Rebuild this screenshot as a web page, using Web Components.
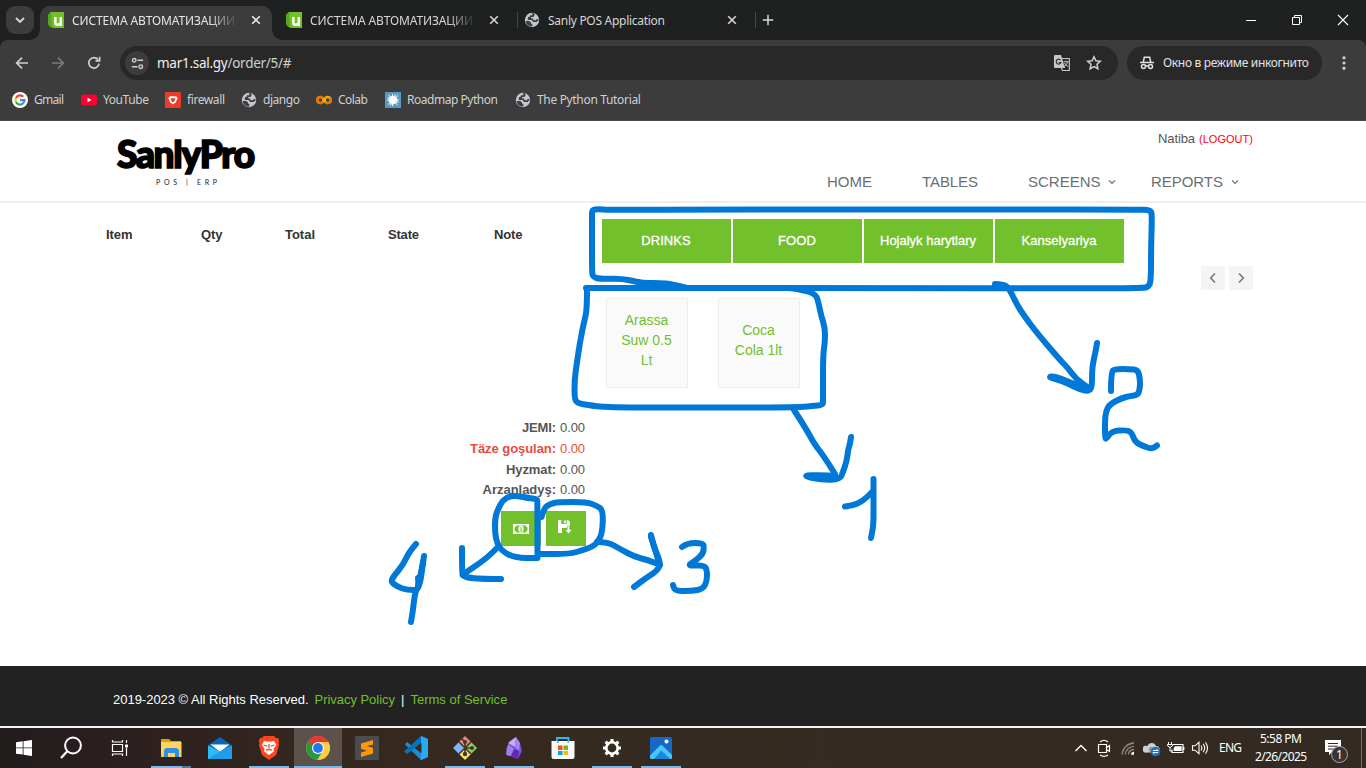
<!DOCTYPE html>
<html lang="ru"><head><meta charset="utf-8"><title>СИСТЕМА АВТОМАТИЗАЦИИ</title>
<style>
html,body{margin:0;height:100%;overflow:hidden;background:#fff}
body{font-family:"Liberation Sans",Arial,sans-serif}
</style></head><body>
<desktop-screen></desktop-screen>
<script>
const define=(name,css,html,setup)=>customElements.define(name,class extends HTMLElement{
  connectedCallback(){
    if(this.shadowRoot)return;
    const root=this.attachShadow({mode:'open'});
    root.innerHTML=`<style>*{box-sizing:border-box}${css}</style>${typeof html==='function'?html(this):html}`;
    if(setup)setup(this,root);
  }
});

/* One line of text whose tracking is adjusted so that it takes exactly w pixels. */
define('fit-text',`:host{display:block;flex:none;white-space:pre}span{display:inline-block;white-space:pre}`,'<span><slot></slot></span>',(el,root)=>{
  const s=root.querySelector('span'),w=+el.getAttribute('w'),n=el.textContent.length;
  if(!w)return;
  const ls=(w-s.getBoundingClientRect().width)/Math.max(1,n-1);
  s.style.letterSpacing=ls+'px';s.style.marginRight=-ls+'px';
});

const globe='<circle cx="8" cy="8" r="7.2" fill="#c4c7cc"/><path d="M1.700 9h3.600l1.700 1.500v1.300H8.300v2.700C4.500 14.600 2 12.300 1.700 9z" fill="#3c3e42"/><path d="M8.200 1.600l1.600.9-.8 1.700H6.600L6 5.800H4.800L4.600 7.200H8l1.600 2h2.800L13 8l1.500-.2" fill="none" stroke="#3c3e42" stroke-width="1.700"/>';
const P=(d,w=1.7,x='')=>`<path d="${d}" fill="none" stroke="currentColor" stroke-width="${w}" ${x}/>`;
const icons={
 unify:['0 0 16 16','<path d="M3 0h13v16H6a6 6 0 0 1-6-6V3z" fill="#72c02c"/><path d="M3 0L0 3v7a6 6 0 0 0 4 5.600z" fill="#5aa51b"/><path d="M7.400 5v5.800q0 2 2.200 2t3.200-2V5M12.800 10v4" fill="none" stroke="#fff" stroke-width="2.400"/>'],
 globe:['0 0 16 16',globe],
 down:['0 0 16 16',P('M4 6l4 4 4-4',1.9)],
 caret:['0 0 10 10',P('M2 3.500l3 3 3-3',1.1)],
 x:['0 0 16 16',P('M4.200 4.200l7.600 7.600M11.800 4.200l-7.600 7.600',1.6)],
 plus:['0 0 16 16',P('M8 2.700v10.600M2.700 8h10.600',1.5)],
 back:['0 0 16 16',P('M14 8H3M8 2.700L2.700 8 8 13.300')],
 fwd:['0 0 16 16',P('M2 8h11M8 2.700L13.300 8 8 13.300')],
 reload:['0 0 16 16',P('M13.100 8.700A5.200 5.200 0 1 1 12 4.500M13.600 1.800v4.100H9.500')],
 tune:['0 0 16 16',P('M8 4.600h6M2 11.400h6',1.6)+'<g fill="none" stroke="currentColor" stroke-width="1.500"><circle cx="4.500" cy="4.600" r="1.900"/><circle cx="11.500" cy="11.400" r="1.900"/></g>'],
 translate:['0 0 18 18','<path d="M2 1h6l4 13H2a1 1 0 0 1-1-1V2a1 1 0 0 1 1-1z" fill="#c7c7c7"/><path d="M9 4.500h7.300v12H9.500L8.300 14" fill="none" stroke="#c7c7c7" stroke-width="1.200"/><path d="M7.600 6.200a2.400 2.400 0 1 0 .300 2.300H5.700" fill="none" stroke="#333" stroke-width="1.200"/><path d="M10.500 7.800h5M13 6.500v1.300M14.500 8c-.500 2-2 3.500-3.500 4.500M11.500 9c.700 1.600 2 2.800 3.300 3.500" fill="none" stroke="#c7c7c7"/>'],
 star:['0 0 16 16',P('M8 1.800l1.900 4 4.400.500-3.300 3 .9 4.400L8 11.500l-3.900 2.200.9-4.400-3.300-3 4.400-.500z',1.5)],
 incog:['0 0 16 16',P('M1 7.400h14M4.300 7l1-4.700h5.400l1 4.700M6.400 11.200q1.600-.900 3.200 0',1.5)+'<g fill="none" stroke="currentColor" stroke-width="1.500"><circle cx="4.500" cy="11.600" r="2"/><circle cx="11.500" cy="11.600" r="2"/></g>'],
 kebab:['0 0 16 16','<g fill="currentColor"><circle cx="8" cy="2.800" r="1.600"/><circle cx="8" cy="8" r="1.600"/><circle cx="8" cy="13.200" r="1.600"/></g>'],
 min:['0 0 12 12','<path d="M1 6h10v1H1z" fill="#fff"/>'],
 restore:['0 0 12 12','<path d="M1.500 3.500h7v7h-7zM3.500 3V1.500h7v7H9" fill="none" stroke="#fff"/>'],
 close:['0 0 12 12','<path d="M1 1l10 10M11 1L1 11" stroke="#fff" stroke-width="1.100"/>'],
 google:['0 0 16 16','<circle cx="8" cy="8" r="8" fill="#fff"/><g fill="none" stroke-width="2.200"><path d="M11.300 4.800A4.500 4.500 0 0 0 4 5.900" stroke="#ea4335"/><path d="M4 5.900a4.500 4.500 0 0 0 0 4.200" stroke="#fbbc05"/><path d="M4 10.100a4.500 4.500 0 0 0 7 1.300" stroke="#34a853"/><path d="M11 11.400A4.500 4.500 0 0 0 12.500 8.200H8" stroke="#4285f4"/></g>'],
 yt:['0 0 16 16','<rect y="2.500" width="16" height="11" rx="3" fill="#ff0033"/><path d="M6.500 5.700v4.600l4-2.300z" fill="#fff"/>'],
 fire:['0 0 16 16','<rect width="16" height="16" rx="1" fill="#ea3c27"/><path d="M5 4.300h6l1.700 1.900-1.900 4L8 12.500l-2.800-2.300-1.900-4z" fill="#fff"/><path d="M5.500 6.200h5L9.300 9.300 8 10.300 6.700 9.300z" fill="#ea3c27"/>'],
 colab:['0 0 16 16','<g fill="none" stroke-width="2.500"><circle cx="4.300" cy="8" r="3.100" stroke="#f9ab00"/><circle cx="11.700" cy="8" r="3.100" stroke="#f9ab00"/><path d="M7 6.500a3.100 3.100 0 1 0 0 3M13.900 5.800A3.100 3.100 0 0 1 9.500 10.200" stroke="#e8710a"/></g>'],
 road:['0 0 16 16','<path d="M0 0h16v16H0z" fill="#5a9cc0"/><circle cx="8" cy="8" r="4.300" fill="#fff"/><path d="M3.500 3l9 10M13 3.500L3 12.500M7.500 2v12M2 8h12M10.500 2.500l-5 11M2.500 5.500l11 5" stroke="#fff" stroke-width="1"/>'],
 win:['0 0 16 16','<path d="M0 2.300l6.700-1v6.200H0zM7.500 1.200L16 0v7.500H7.500zM0 8.300h6.700v6.300L0 13.700zM7.500 8.300H16V16l-8.500-1.200z" fill="#fff"/>'],
 search:['0 0 24 24','<circle cx="14" cy="9.500" r="7.900" fill="none" stroke="#fff" stroke-width="2"/><path d="M8.500 15L2 22" stroke="#fff" stroke-width="2.200"/>'],
 task:['0 0 18 18','<path d="M1.500 5.500h10v7h-10zM1.500 1v2h10V1M1.500 17v-2h10v2M15.500 1v3M15.500 9v8" fill="none" stroke="#fff" stroke-width="1.200"/><path d="M14 5.500h3v3h-3z" fill="#fff"/>'],
 explorer:['0 0 24 24','<path d="M2 3h8l2 2h10v5H2z" fill="#e1a000"/><path d="M2 6h20.500v15H2z" fill="#ffd45e"/><path d="M5 21v-7l2-2h11l2 2v7h-4v-4H9v4z" fill="#318fdf"/><path d="M2 18h3v3H2z" fill="#ffc83d"/>'],
 mail:['0 0 24 24','<path d="M0 9.500L12 1l12 8.500v3H0z" fill="#0868bb"/><path d="M2.500 8.500h19L12 16z" fill="#fff"/><path d="M0 9.500L12 15.500l12-6V23H0z" fill="#2bbcf6"/><path d="M0 23L12 15.500l12-6V23z" fill="#1c9fe8"/>'],
 brave:['0 0 24 24','<path d="M7 0h10l2 2h2l1.300 3-.7 2 .5 2-3 10L12 24l-7-5L2 9l.5-2-.8-2L3 2h2z" fill="#ff4520"/><path d="M7 5l5 .7 5-.7 2.200 4-2.700 4 .3 2.500L12 19l-4.800-3.500.3-2.500-2.700-4z" fill="#fff"/><path d="M6.500 9l3.700 1.200M17.500 9l-3.700 1.200M12 8v4M9 14.200l3-.9 3 .9" stroke="#ff4520" stroke-width="1.300" fill="none"/>'],
 chrome:['0 0 24 24','<circle cx="12" cy="12" r="11.800" fill="#ffce44"/><path d="M1.800 6A11.800 11.800 0 0 0 11.500 23.800L17 15z" fill="#279847"/><path d="M12 6h10.300A11.800 11.800 0 0 1 11.500 23.800L17.100 15z" fill="#ffce44"/><path d="M1.800 6L7 15l5-9h10.300A11.800 11.800 0 0 0 1.800 6z" fill="#e53935"/><path d="M1.800 6l5 9 3 2.500L8 9z" fill="#279847"/><circle cx="12" cy="12" r="6" fill="#fff"/><circle cx="12" cy="12" r="4.900" fill="#2775ed"/>'],
 sublime:['0 0 24 24','<rect width="24" height="24" rx="1.500" fill="#4b4c4e"/><path d="M6 7.500L18 4v4.500L12 10l6 2v5.500L6 21v-4.500l6-1.700-6-2z" fill="#ff9800"/>'],
 code:['0 0 24 24','<path d="M17 0l7 3v18l-7 3L1 8.500 3 6l14 11z" fill="#1b8dd8"/><path d="M17 0L0 15.500 3 18 17.500 7z" fill="#0672bb"/><path d="M17 0l7 3v18l-7 3z" fill="#29a9f2"/><path d="M17.500 7v10L11 12z" fill="#352b23"/>'],
 git:['0 0 24 24','<path d="M12 0l6 6-6 6-6-6z" fill="#f28080"/><path d="M18 6l6 6-6 6-6-6z" fill="#8bcf62"/><path d="M6 6l6 6-6 6-6-6z" fill="#82b4ff"/><path d="M12 12l6 6-6 6-6-6z" fill="#ffe073"/><path d="M6 6l12 12M18 6L6 18M8 2l4 4v12M12 12h7" stroke="#40372b" stroke-width="1.600" fill="none"/><circle cx="12" cy="6" r="2" fill="#40372b"/><circle cx="12" cy="18" r="2.200" fill="#40372b"/><circle cx="19" cy="12" r="2" fill="#40372b"/>'],
 obsidian:['0 0 24 24','<path d="M14 1l4 6 2 8-4 8-11-4-1-6 4-8z" fill="#7e4ce0"/><path d="M14 1l-1 10-7-4z" fill="#c5adf3"/><path d="M14 1l4 6-1 8-4-4z" fill="#a486ee"/><path d="M6 8l6 5-3 7-5-1z" fill="#9b83e5"/><path d="M12 13l5 2-1 8-7-3z" fill="#5e2bb2"/>'],
 store:['0 0 24 24','<path d="M6 5.500V2h11.500v3.500" fill="none" stroke="#2ebcf0" stroke-width="1.800"/><path d="M.5 5h23v16q0 2-2 2h-19q-2 0-2-2z" fill="#fafafa"/><path d="M6 5h1.500v2H6zM16.500 5H18v2h-1.500z" fill="#2ebcf0"/><path d="M7 9.500h4.500V14H7z" fill="#f25022"/><path d="M12.500 9.500H17V14h-4.500z" fill="#7fba00"/><path d="M7 15h4.500v4H7z" fill="#00a4ef"/><path d="M12.500 15H17v4h-4.500z" fill="#ffb900"/>'],
 gear:['0 0 24 24','<circle cx="12" cy="12" r="5.700" fill="none" stroke="#fff" stroke-width="2.600"/><g stroke="#fff" stroke-width="3.200"><path d="M12 3v3M12 18v3M3 12h3M18 12h3M5.600 5.600l2 2M16.400 16.400l2 2M5.600 18.400l2-2M16.400 7.600l2-2"/></g>'],
 photos:['0 0 24 24','<rect x="1" y="1" width="22" height="22" rx="1.500" fill="#1769c4"/><path d="M4 23L11.500 14l1.500-.5L23 22q-.3 1-1.500 1z" fill="#1d87e0"/><path d="M1 19.500L11 9.600q1.200-1 2.400 0L23 19v2.500q0 1.500-1.500 1.500L12.200 14.500 5 23H2.500Q1 23 1 21.500z" fill="#46c8f8"/><circle cx="17.500" cy="5.500" r="2" fill="#fff"/>'],
 up:['0 0 16 16','<path d="M2.500 11L8 5.500l5.500 5.500" fill="none" stroke="#fff" stroke-width="1.300"/>'],
 cam:['0 0 18 18','<path d="M3.500 5.500h8v8h-8zM11.500 8.500l3-2v6l-3-2M5 3q4-3.500 8 0M5 16q4 2.600 8 0" fill="none" stroke="#fff" stroke-width="1.200"/>'],
 wifi:['0 0 18 18','<g fill="none" stroke="#8e8984" stroke-width="1.300"><path d="M3 15.500A12.500 12.500 0 0 1 15 4M6.200 15.500A9 9 0 0 1 15 7.300M9.300 15.500A6 6 0 0 1 15 10.500" /></g><path d="M12 15.700a3.200 3.200 0 0 1 3-3v3z" fill="#fff"/>'],
 cloud:['0 0 18 18','<path d="M4 13.500a3.500 3.500 0 1 1 .5-6.500 4.500 4.500 0 0 1 8.500 0 3.500 3.500 0 0 1 2 6.500z" fill="#cfcfcf"/><path d="M7 13a3 3 0 0 1 0-5q4-.5 5 4z" fill="#999"/><circle cx="12.500" cy="12.500" r="4.800" fill="#1c72ca"/><path d="M10 11.500h4.500l-1-1M15 13.500h-4.500l1 1" fill="none" stroke="#fff" stroke-width="1.100"/>'],
 batt:['0 0 18 18','<path d="M6 5.500h10v8H5v-3M16.800 8v3" fill="none" stroke="#fff" stroke-width="1.200"/><path d="M8 7.200h6.700v4.700H6.700v-3z" fill="#fff"/><path d="M1.500 3v2.500M4.500 3v2.500M0.500 5.500h5v1.300L3 8.500.5 6.800zM3 8v4h2" fill="none" stroke="#fff"/>'],
 vol:['0 0 18 18','<path d="M1.500 6.800h2.600L8 3.300v11.400l-3.900-3.500H1.500zM10 6.500q1.700 2.500 0 5M12.200 4.800q2.900 4.200 0 8.400M14.500 3.200q4 5.800 0 11.600" fill="none" stroke="#fff" stroke-width="1.100"/>'],
 note:['0 0 18 18','<path d="M1 1h16v12H8l-3 3v-3H1z" fill="#fff"/><path d="M4 4.500h10M4 7.200h10M4 10h6" stroke="#342b24"/>'],
 money:['0 0 16 12','<path d="M0 1h16v10H0z" fill="#fff"/><path d="M3 2.500h10q0 2 1.500 2v3q-1.500 0-1.500 2H3q0-2-1.500-2v-3Q3 4.500 3 2.500z" fill="#72c02c"/><ellipse cx="8" cy="6" rx="2.600" ry="3.200" fill="#fff"/><path d="M7.200 5l1-.7v3M7 7.700h2.300" stroke="#72c02c" stroke-width=".9" fill="none"/>'],
 save:['0 0 16 16','<path d="M1 1h3.300v4h5.400V1h1.300l2 2v5.500h-3V9H5v5H1zM7 1.500h1.700v2.700H7z" fill="#fff"/><path d="M10.300 7.300h2.400v3.200H15L11.500 15 8 10.500h2.300z" fill="#fff" stroke="#72c02c" stroke-width=".7"/>'],
 left:['0 0 16 16',P('M10 3.500L5.700 8l4.300 4.500',1.6)],
 right:['0 0 16 16',P('M6 3.500L10.300 8 6 12.500',1.6)],
};
define('ui-icon',`:host{display:block;flex:none}svg{display:block}`,el=>{
  const [vb,g]=icons[el.getAttribute('name')],s=el.getAttribute('size')||16;
  return `<svg width="${s}" height="${s}" viewBox="${vb}">${g}</svg>`;
});

define('browser-tab',`:host{display:flex;align-items:center;position:relative;width:238px;height:34px;padding:0 0 6px 8px;color:#d6d6d6;font:12px "Noto Sans","Open Sans",sans-serif}
:host([active]){width:232px;margin-right:6px;background:#3c3c3c;border-radius:10px 10px 0 0;color:#e6e6e6}
:host([active])::before,:host([active])::after{content:"";position:absolute;bottom:0;width:10px;height:10px;background:radial-gradient(circle at 0 0,transparent 9.5px,#3c3c3c 10px)}
:host([active])::before{left:-10px}:host([active])::after{right:-10px;background:radial-gradient(circle at 100% 0,transparent 9.5px,#3c3c3c 10px)}
.t{width:166px;margin:1px 10px 0 8px;overflow:hidden;line-height:20px}
:host([fade]) .t{-webkit-mask:linear-gradient(90deg,#000 138px,transparent 166px)}
.s{position:absolute;right:-2px;top:6px;width:1.500px;height:16px;background:#454746}`,
el=>`<ui-icon name="${el.getAttribute('icon')}"></ui-icon><div class="t"><slot></slot></div><ui-icon name="x"></ui-icon>${el.hasAttribute('sep')?'<i class="s"></i>':''}`);

define('tab-strip',`:host{display:flex;height:40px;padding:6px 0 0 6px;background:#1f2120;color:#d8d8d8}
.b{width:28px;height:28px;border-radius:9px;background:#3c3c3c;display:grid;place-items:center;margin-right:6px}
.plus{margin:6px 0 0 6px}.w{margin:8px 17px 0 auto;display:flex;gap:34px}`,
`<div class="b"><ui-icon name="down"></ui-icon></div>
<browser-tab active fade icon="unify"><fit-text w="163">СИСТЕМА АВТОМАТИЗАЦИИ</fit-text></browser-tab>
<browser-tab fade sep icon="unify"><fit-text w="163">СИСТЕМА АВТОМАТИЗАЦИИ</fit-text></browser-tab>
<browser-tab sep icon="globe"><fit-text w="117">Sanly POS Application</fit-text></browser-tab>
<ui-icon class="plus" name="plus"></ui-icon>
<div class="w"><ui-icon name="min" size="12"></ui-icon><ui-icon name="restore" size="12"></ui-icon><ui-icon name="close" size="12"></ui-icon></div>`);

define('tool-bar',`:host{display:flex;align-items:center;height:45px;padding:1px 14px 0;background:#3c3c3c;border-radius:8px 8px 0 0;color:#d0d0d0;font:13.5px/18px "Noto Sans","Open Sans",sans-serif}
.n{display:flex;gap:20px;width:106px}.f{color:#7a7a7a}
.o{display:flex;align-items:center;width:998px;height:34px;border-radius:17px;background:#282828;padding:0 16px 0 5px}
.c{width:24px;height:24px;border-radius:50%;background:#3c3c3c;display:grid;place-items:center;margin-right:8px}
.o b{font-weight:400;color:#f1f1f1}.tr{margin:0 15px 0 auto}
.p{display:flex;align-items:center;width:195px;height:34px;border-radius:17px;background:#282828;margin:0 14px 0 9px;padding-left:12px;font-size:12px;color:#e3e3e3;gap:8px}`,
`<div class="n"><ui-icon name="back"></ui-icon><ui-icon class="f" name="fwd"></ui-icon><ui-icon name="reload"></ui-icon></div>
<div class="o"><div class="c"><ui-icon name="tune" size="15"></ui-icon></div><fit-text w="134.500"><b>mar1.sal.gy</b>/order/5/#</fit-text><ui-icon class="tr" name="translate" size="18"></ui-icon><ui-icon name="star"></ui-icon></div>
<div class="p"><ui-icon name="incog"></ui-icon><fit-text w="146">Окно в режиме инкогнито</fit-text></div><ui-icon name="kebab"></ui-icon>`);

const marks=[['google','Gmail',30,17],['yt','YouTube',46,16],['fire','firewall',38,16],['globe','django',37,16],['colab','Colab',30,17],['road','Roadmap Python',91,17],['globe','The Python Tutorial',104,0]];
define('bookmark-bar',`:host{display:flex;align-items:center;height:36px;padding:0 12px 6px;background:#3c3c3c;border-bottom:1px solid #4a4a4a;color:#d0d0d0;font:12px/18px "Noto Sans","Open Sans",sans-serif}ui-icon{margin-right:6px}`,
marks.map(([i,t,w,g])=>`<ui-icon name="${i}"></ui-icon><fit-text w="${w}" style="margin-right:${g}px">${t}</fit-text>`).join(''));

define('site-header',`:host{display:flex;justify-content:space-between;height:82px;padding:0 113px 0 117px;border-bottom:2px solid #eee;background:#fff;color:#555}
.logo{color:#000;padding-top:11px;font-family:Lato,sans-serif}
.n{font-size:37px;font-weight:900;line-height:44px;-webkit-text-stroke:1.700px #000}
.e{font-size:7px;font-weight:400;line-height:8px;margin:2px 0 0 39px;color:#222}
.u{display:flex;justify-content:flex-end;align-items:baseline;gap:4px;font-size:13px;line-height:16px;padding-top:10px}.l{font-size:11px;color:#f00}
nav{display:flex;margin-top:26px;font-size:15px;line-height:18px;color:#687074;align-items:center;width:426px}
nav ui-icon{margin-left:7px}`,
`<div class="logo"><fit-text class="n" w="138">SanlyPro</fit-text><fit-text class="e" w="61">POS | ERP</fit-text></div>
<div><div class="u"><fit-text w="37">Natiba</fit-text><fit-text class="l" w="54">(LOGOUT)</fit-text></div>
<nav><fit-text w="45" style="margin-right:50px">HOME</fit-text><fit-text w="56" style="margin-right:50px">TABLES</fit-text><fit-text w="72.500">SCREENS</fit-text><ui-icon name="caret" size="10"></ui-icon><fit-text w="72" style="margin-left:33.500px">REPORTS</fit-text><ui-icon name="caret" size="10"></ui-icon></nav></div>`);

define('green-tab',`:host{display:grid;place-items:center;width:129px;height:44px;background:#72c02c;color:#fff;font-size:13px;line-height:16px;padding:0 1px 1px 0;-webkit-text-stroke:.3px #fff}`,'<slot></slot>');
define('product-card',`:host{display:flex;align-items:center;justify-content:center;text-align:center;width:82px;height:90px;background:#fafafa;border:1px solid #eee;color:#72c02c;font-size:14px;line-height:20px;padding:0 13px 6px 12px}`,'<slot></slot>');
define('order-table',`:host{display:grid;grid-template-columns:95px 84px 103px 106px auto;height:217px;align-content:start;padding-top:24px;font:bold 13px/16px "Liberation Sans",sans-serif;color:#333}`,
`<fit-text w="26.500">Item</fit-text><fit-text w="21.500">Qty</fit-text><fit-text w="30">Total</fit-text><fit-text w="31">State</fit-text><fit-text w="28.500">Note</fit-text>`);
define('order-totals',`:host{display:flex;flex-direction:column;align-items:flex-end;font-size:13px;color:#555;width:480px}
div{display:flex;gap:4px;height:20.800px;line-height:16px;padding-right:1px}.r{color:#e74c3c}.k{font-weight:700}
.a{height:35px;gap:5px;margin-top:8px;padding:0}.a span{width:40px;background:#72c02c;display:grid;place-items:center}.a .s{padding:0 2px 3px 0}`,
`<div><fit-text class="k" w="34">JEMI:</fit-text><fit-text w="25">0.00</fit-text></div>
<div class="r"><fit-text class="k" w="86">Täze goşulan:</fit-text><fit-text w="25">0.00</fit-text></div>
<div><fit-text class="k" w="50">Hyzmat:</fit-text><fit-text w="25">0.00</fit-text></div>
<div><fit-text class="k" w="73.500">Arzanladyş:</fit-text><fit-text w="25">0.00</fit-text></div>
<div class="a"><span><ui-icon name="money"></ui-icon></span><span class="s"><ui-icon name="save"></ui-icon></span></div>`);

define('order-page',`:host{display:flex;height:463px;padding-left:106px;background:#fff}
.r{margin-left:16px;width:651px;padding-top:16px}.c{display:flex;gap:2px}
.n{display:flex;justify-content:flex-end;gap:4px;margin-top:3px;height:24px}.n span{width:24px;background:#f4f4f4;display:grid;place-items:center;color:#777}
.p{display:flex;gap:30px;margin:8px 0 0 4px}`,
`<div><order-table></order-table><order-totals></order-totals></div>
<div class="r"><div class="c"><green-tab><fit-text w="49.500">DRINKS</fit-text></green-tab><green-tab><fit-text w="38">FOOD</fit-text></green-tab><green-tab><fit-text w="96">Hojalyk harytlary</fit-text></green-tab><green-tab><fit-text w="75">Kanselyariya</fit-text></green-tab></div>
<div class="n"><span><ui-icon name="left"></ui-icon></span><span><ui-icon name="right"></ui-icon></span></div>
<div class="p"><product-card>Arassa Suw 0.5 Lt</product-card><product-card>Coca Cola 1lt</product-card></div></div>`);

define('site-footer',`:host{display:flex;height:60px;padding:26px 0 0 113px;background:#222;color:#fff;font-size:13px;line-height:16px}.g{color:#72c02c}`,
`<fit-text w="195.500" style="margin-right:6px">2019-2023 © All Rights Reserved.</fit-text><fit-text class="g" w="80.500" style="margin-right:6px">Privacy Policy</fit-text><fit-text>|</fit-text><fit-text class="g" w="97" style="margin-left:6px">Terms of Service</fit-text>`);

define('task-button',`:host{display:grid;place-items:center;width:49px;height:40px;position:relative}
:host([active]){background:linear-gradient(90deg,#5d524b 48px,transparent 48px)}
:host([open])::after,:host([active])::after{content:"";position:absolute;left:4px;right:5px;bottom:0;height:2px;background:#76b9ed}
:host([active])::after{left:0;right:1px}:host([multi])::after{background:linear-gradient(90deg,#76b9ed 31px,#527999 31px)!important}
ui-icon{margin-left:-1px}`,el=>`<ui-icon name="${el.getAttribute('icon')}" size="${el.getAttribute('size')||24}"></ui-icon>`);
define('task-bar',`:host{display:flex;height:42px;border-top:2px solid #f8f0f5;background:linear-gradient(90deg,#211c1c,#2b1e1f 100px,#35291f 340px,#362b22 60%,#332a22);color:#fff;font:12px/18px "Noto Sans","Open Sans",sans-serif}
.a{display:flex;width:147px;align-items:center;padding-left:16px}
.tray{display:flex;align-items:center;margin-left:auto;width:293px;gap:6px}
.clock{width:56px;text-align:center;display:flex;flex-direction:column;align-items:center;margin-left:5px}
.nt{position:relative;margin-left:9px}.nt i{position:absolute;left:7px;top:7px;width:17px;height:17px;border:1px solid #aaa;border-radius:50%;background:#373534;font:12px/15px "Noto Sans",sans-serif;text-align:center}
.end{width:1px;height:40px;background:#77716c;margin-left:13px}`,
`<div class="a"><ui-icon name="win"></ui-icon><ui-icon name="search" size="24" style="margin-left:27px"></ui-icon><ui-icon name="task" size="18" style="margin-left:28px"></ui-icon></div>
<task-button open multi icon="explorer"></task-button><task-button icon="mail"></task-button><task-button open icon="brave"></task-button><task-button active icon="chrome"></task-button><task-button icon="sublime"></task-button><task-button icon="code"></task-button><task-button open icon="git"></task-button><task-button open icon="obsidian"></task-button><task-button icon="store"></task-button><task-button open icon="gear"></task-button><task-button open icon="photos"></task-button>
<div class="tray"><ui-icon name="up"></ui-icon><ui-icon name="cam" size="18"></ui-icon><ui-icon name="wifi" size="18"></ui-icon><ui-icon name="cloud" size="18"></ui-icon><ui-icon name="batt" size="18"></ui-icon><ui-icon name="vol" size="18"></ui-icon><fit-text w="23" style="margin-left:4px">ENG</fit-text>
<div class="clock"><fit-text w="42">5:58 PM</fit-text><fit-text w="52">2/26/2025</fit-text></div><div class="nt"><ui-icon name="note" size="18"></ui-icon><i>1</i></div><div class="end"></div></div>`);

/* Freehand pen marks lying over the page, one point list per stroke. */
const strokes=[
 '687,288 672,284 660,283 645,283 637,282 622,278.5 600,279 593,277 592,272 592,240 592,216 592,210 598,209 608,210 700,209.500 1000,209.500 1138,209.500 1151,210 1152,216 1151,250 1151,279 1149,287 1142,288 1090,288.500 900,288 586,288',
 '587,289 587,310 584,322 580,342 577,362 574.5,380 574.5,398 577,403 587,405 607,407.5 693,407.5 793,407.5 813,406 823,405 823,400 823,355 825,342 825,328 821,315 819,305 816,294 803,290 790,288',
 '995,284 1003,284 1009,288 1017,305 1025,317 1037,333 1060,360 1068,368 1076,379 1090,389','1097,343 1096,350 1094,358 1092,370 1092,390 1085,391 1077,388 1063,381 1048,377 1054,376 1064,380 1082,387',
 '1111,391 1111,372 1115,369 1130,369 1138,370 1140,379 1140,388 1138,395 1130,396 1122,398 1110,404 1106,411 1105,420 1105,438 1106,439 1112,431 1127,430 1132,433 1135,442 1143,446 1152,449 1157,445.500',
 '794,410 805,427 815,445 823,455 835,474','851,437 850,444 848,450 847,460 843,472 840,479.500 822,480 801,475.500 822,475 835,476',
 '845,506.500 852,506 863,501 872,492','873.500,479 873.500,505 873.500,524 872,533 871,538',
 '537.500,558 537.500,502 537,499 528,498 518,496 510,496 503,500 498,509 495,518 495,533 497,543 502,551 515,558 537.500,558',
 '541.500,517 544,508 550,504 558,502 587,502 597,506 603,510 602.500,532 598,542 592,547 583,550 570,554 540,554',
 '498,547 490,555 480,563 465,573','462,548 462,574 463,576 470,578 485,579 501,579',
 '416,544 409,552 403,565 393,577 391,582 398,587 407,590 419,590 418,578','424,556 422,570 420,584 415,592 413,610 411,622','423,562 421,573 418,586',
 '597,542 608,542 620,549 635,557 648,560 660,565','651,535 654,548 661,563 657,571 646,578 634,587','651,537 656,552 658,560',
 '682,547 687,543 703,543 704,547 703,554 695,561 687,566 704,565 707,570 707,581 703,589 692,591 675,591 673,585'];
const smooth=s=>{const p=s.split(' ').map(a=>a.split(',').map(Number));let d=`M${p[0]}`;
  for(let i=1;i<p.length-1;i++){d+=`Q${p[i]} ${(p[i][0]+p[i+1][0])/2},${(p[i][1]+p[i+1][1])/2}`}
  return d+`L${p[p.length-1]}`;};
define('ink-layer',`:host{display:block;position:absolute;inset:0;pointer-events:none}svg{display:block}`,
`<svg width="1366" height="768" fill="none" stroke="#0078d7" stroke-width="6" stroke-linecap="round" stroke-linejoin="round">${strokes.map(s=>`<path d="${smooth(s)}"/>`).join('')}</svg>`);

define('desktop-screen',`:host{display:flex;flex-direction:column;width:1366px;height:768px;position:relative;overflow:hidden;background:#1f2120}tab-strip,tool-bar,bookmark-bar,site-header,order-page,site-footer,task-bar{flex:none}`,
`<tab-strip></tab-strip><tool-bar></tool-bar><bookmark-bar></bookmark-bar><site-header></site-header><order-page></order-page><site-footer></site-footer><task-bar></task-bar><ink-layer></ink-layer>`);
</script></body></html>
